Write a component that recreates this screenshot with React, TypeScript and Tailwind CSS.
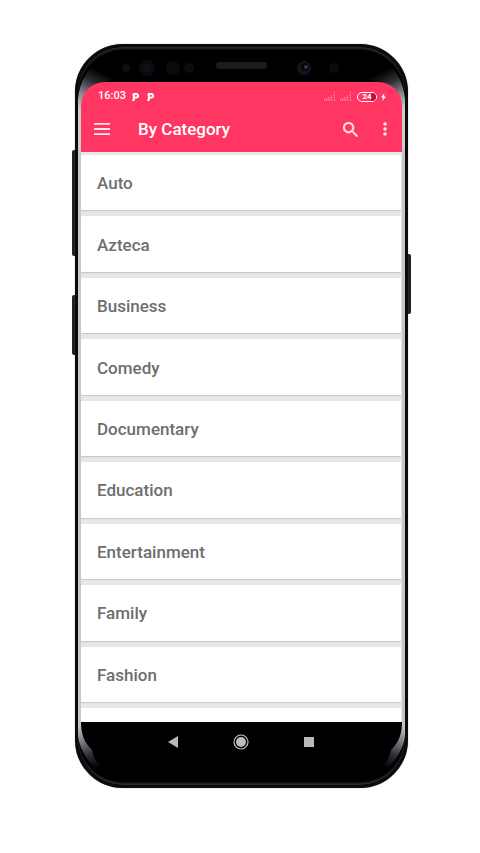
import React from 'react';

const categories = [
  'Auto',
  'Azteca',
  'Business',
  'Comedy',
  'Documentary',
  'Education',
  'Entertainment',
  'Family',
  'Fashion',
];

const PandoraIcon = () => (
  <svg viewBox="0 0 8 9" className="w-[7px] h-2" fill="#fff" fillRule="evenodd" aria-hidden="true">
    <path d="M1 0H5A3 3 0 0 1 5 6.2H3.4L2.8 9H.2L1.3 3.6H.4ZM3.7 2.1L3.3 4.1H4.7A1 1 0 0 0 4.7 2.1Z" />
  </svg>
);

const SignalIcon = () => (
  <svg viewBox="0 0 12 9" className="w-3 h-[9px]" fill="#fff" aria-hidden="true">
    <path d="M0 7h1.2v2H0zM2.2 6h1.2v3H2.2zM4.4 5h1.2v4H4.4z" opacity=".4" />
    <path d="M6.8 3h1.2v6H6.8z" opacity=".3" />
    <path d="M9.6 0h1.4v1H9.6zM9.6 2h1.4v1.6H9.6zM9.6 4.6h1.4v1.6H9.6zM9.6 7.2h1.4V9H9.6z" opacity=".4" />
  </svg>
);

// Reflection on the curved glass, one per upper corner
const TopGlare = ({ id, className }: { id: string; className: string }) => (
  <svg viewBox="0 0 50 106" className={`absolute top-0 w-[50px] h-[106px] ${className}`} aria-hidden="true">
    <defs>
      <linearGradient id={id} x1="22" y1="24" x2="2" y2="62" gradientUnits="userSpaceOnUse">
        <stop offset="0" stopColor="#000" />
        <stop offset=".3" stopColor="#2b2c31" />
        <stop offset=".65" stopColor="#85858b" />
        <stop offset="1" stopColor="#cccccc" />
      </linearGradient>
    </defs>
    <path d="M0 106V52C2 34 9 22 22 13L44 30C26 34 14 40 8 58L3 106Z" fill={`url(#${id})`} />
  </svg>
);

const BottomGlare = ({ id, className }: { id: string; className: string }) => (
  <svg viewBox="0 0 40 63" className={`absolute bottom-0 w-10 h-[63px] ${className}`} aria-hidden="true">
    <defs>
      <linearGradient id={id} x1="2" y1="4" x2="20" y2="46" gradientUnits="userSpaceOnUse">
        <stop offset="0" stopColor="#c4c4c6" />
        <stop offset=".35" stopColor="#77777e" />
        <stop offset=".65" stopColor="#30313b" />
        <stop offset="1" stopColor="#000" />
      </linearGradient>
    </defs>
    <path d="M0 0H3C3 12 6 20 14 28C16 38 22 46 32 54C16 48 3 34 0 14Z" fill={`url(#${id})`} />
  </svg>
);

const Sensors = () => (
  <div className="relative h-[35px] shrink-0" aria-hidden="true">
    <svg viewBox="0 0 327 35" className="w-full h-full">
      <circle cx="48" cy="21" r="4" fill="#0d0d12" />
      <circle cx="69" cy="21" r="8" fill="#0a0a10" />
      <circle cx="69" cy="21" r="4" fill="#0f0f18" />
      <circle cx="95" cy="21" r="7" fill="#0a0a0f" />
      <circle cx="111" cy="21" r="5" fill="#0c0c10" />
      <rect x="138" y="15" width="51" height="7" rx="3" fill="#1b1b1b" />
      <circle cx="226" cy="21" r="7" fill="#15151d" />
      <circle cx="227" cy="20" r="4" fill="#05050c" />
      <circle cx="228" cy="20" r="2" fill="#35354f" />
      <circle cx="256" cy="21" r="5" fill="#0c0c10" />
    </svg>
  </div>
);

const StatusBar = () => (
  <div className="flex items-center h-7 pt-px pl-[17px] pr-4 text-[11px] font-medium">
    <span>16:03</span>
    <span className="flex gap-2 ml-[6px]">
      <PandoraIcon />
      <PandoraIcon />
    </span>
    <span className="flex items-center gap-1 ml-auto">
      <SignalIcon />
      <SignalIcon />
      <span className="relative flex items-center justify-center w-5 h-[10px] ml-px rounded-full border border-white overflow-hidden text-[8px] leading-none font-bold">
        <span className="absolute inset-y-0 right-0 w-[5px] bg-[#b3123c]"></span>
        <span className="relative">24</span>
      </span>
      <svg viewBox="0 0 5 8" className="w-[5px] h-2" fill="#fff" aria-hidden="true">
        <path d="M3.4 0L0 4.5H2L1.5 8L5 3.4H2.9Z" />
      </svg>
    </span>
  </div>
);

const Toolbar = () => (
  <div className="flex items-center h-[42px] pl-3 pr-2 pb-1">
    <button type="button" aria-label="Open menu" className="w-[18px] h-6 flex items-center justify-center">
      <svg viewBox="0 0 16 12" className="w-4 h-3" fill="#ffe9ee">
        <path d="M0 0h16v1.8H0zM0 5.1h16v1.8H0zM0 10.2h16V12H0z" />
      </svg>
    </button>
    <h1 className="ml-[27px] text-[17px] leading-6 font-medium">By Category</h1>
    <button type="button" aria-label="Search" className="ml-auto w-6 h-6 flex items-center justify-center">
      <svg viewBox="3 3 17.5 17.5" className="w-[15px] h-[15px]" fill="#ffe9ee" stroke="#ffe9ee" strokeWidth=".4">
        <path d="M15.5 14h-.79l-.28-.27A6.47 6.47 0 0 0 16 9.5 6.5 6.5 0 1 0 9.5 16c1.61 0 3.09-.59 4.23-1.57l.27.28v.79l5 4.99L20.49 19l-4.99-5zm-6 0C7.01 14 5 11.99 5 9.5S7.01 5 9.5 5 14 7.01 14 9.5 11.99 14 9.5 14z" />
      </svg>
    </button>
    <button type="button" aria-label="More options" className="ml-[14px] w-[18px] h-6 flex items-center justify-center">
      <svg viewBox="0 0 4 14" className="w-1 h-[14px]" fill="#ffe9ee">
        <circle cx="2" cy="2" r="1.8" />
        <circle cx="2" cy="7" r="1.8" />
        <circle cx="2" cy="12" r="1.8" />
      </svg>
    </button>
  </div>
);

const CategoryList = () => (
  <ul className="flex-1 flex flex-col gap-[6px] pt-[3px] bg-[#e5e7ea]">
    {categories.map((name) => (
      <li key={name} className="flex-1 flex">
        <button
          type="button"
          className="flex-1 flex items-center px-4 pt-px mr-px bg-white rounded-[1px] shadow-[0_1px_1px_#c3c8cc] text-left text-[17px] leading-6 font-medium text-[#6e6e6e]"
        >
          {name}
        </button>
      </li>
    ))}
    <li className="h-[14px] mr-px bg-white"></li>
  </ul>
);

const NavBar = () => (
  <nav className="flex justify-center h-[63px] pt-3 pr-[2px] gap-[52px] shrink-0">
    <button type="button" aria-label="Back" className="w-4 h-4 flex items-center justify-center">
      <svg viewBox="0 0 10 12" className="w-[10px] h-3" fill="#b9b9b9">
        <path d="M10 0V12L0 6Z" />
      </svg>
    </button>
    <button type="button" aria-label="Home" className="w-4 h-4">
      <svg viewBox="0 0 16 16" className="w-4 h-4">
        <circle cx="8" cy="8" r="7" fill="none" stroke="#c4c4c4" strokeWidth="1.2" />
        <circle cx="8" cy="8" r="5" fill="#bdbdbd" />
      </svg>
    </button>
    <button type="button" aria-label="Recent apps" className="w-4 h-4 flex items-center justify-center">
      <span className="w-[10px] h-[10px] bg-[#b9b9b9]"></span>
    </button>
  </nav>
);

const App = () => {
  return (
    <div className="min-h-screen flex flex-col bg-white pt-11 pb-[65px] pl-[75px] pr-[72px] font-['Roboto','Liberation_Sans',sans-serif]">
      <div className="relative flex-1 flex flex-col">
        {/* Side keys */}
        <div className="absolute -left-[3px] top-[106px] w-[6px] h-[106px] rounded-[2px] bg-[#222]"></div>
        <div className="absolute -left-[3px] top-[251px] w-[6px] h-[60px] rounded-[2px] bg-[#222]"></div>
        <div className="absolute -right-[3px] top-[210px] w-[6px] h-[60px] rounded-[2px] bg-[#222]"></div>

        <div className="relative flex-1 flex flex-col rounded-[48px] bg-black border-[3px] border-[#0b0b0b] shadow-[inset_0_2px_2px_#2c2c2c,inset_0_-2px_2px_#303030,0_0_1px_#555] overflow-hidden">
          <TopGlare id="glare-tl" className="left-0" />
          <TopGlare id="glare-tr" className="right-0 -scale-x-100" />
          <BottomGlare id="glare-bl" className="left-0" />
          <BottomGlare id="glare-br" className="right-0 -scale-x-100" />
          <div className="absolute left-0 top-[100px] bottom-[63px] w-[3px] bg-[#c8c8c8]"></div>
          <div className="absolute right-0 top-[100px] bottom-[63px] w-[3px] bg-[#c3c6c8]"></div>

          <Sensors />
          <main className="relative flex-1 flex flex-col mx-[3px]">
            <header className="rounded-t-[24px] bg-[#ff3562] text-white">
              <StatusBar />
              <Toolbar />
            </header>
            <CategoryList />
          </main>
          <NavBar />
        </div>
      </div>
    </div>
  );
};

export default App;
